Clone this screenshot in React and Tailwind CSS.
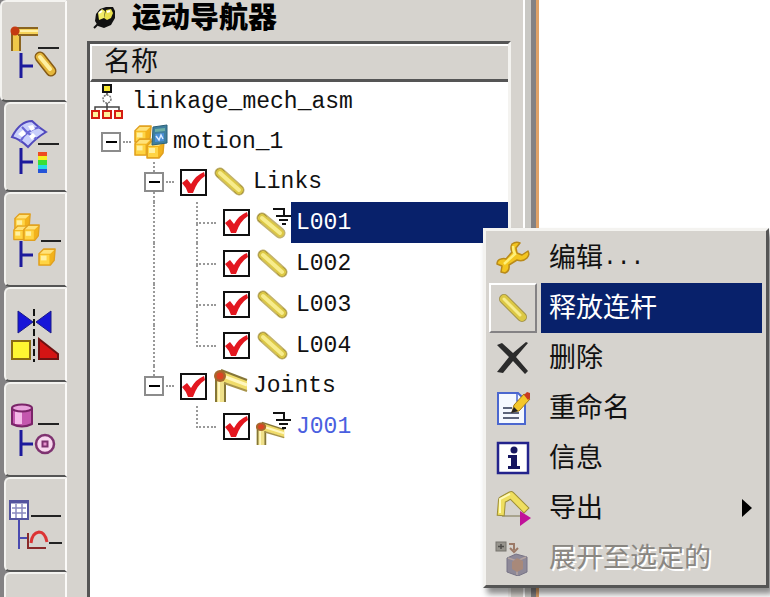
import { useState } from "react";

const treeFont = "font-['Liberation_Mono','Noto_Sans_CJK_SC',monospace]";
const cjkFont = "font-['Liberation_Sans','Noto_Sans_CJK_SC',sans-serif]";

/* ---------- tree icons ---------- */

function Ground() {
  return <path d="M17 4h11v7M20 11h15M23 15h9M26 19h4" fill="none" stroke="#111" strokeWidth="2" />;
}

function LinkIcon({ grounded }) {
  const d = grounded ? "M6 13 24 28" : "M7 9 26 26";
  return (
    <svg viewBox="0 0 35 36" className="w-[35px] h-9 shrink-0" aria-hidden="true">
      <path d={d} stroke="#c2b26e" strokeWidth="11" strokeLinecap="round" />
      <path d={d} stroke="#8d7a2c" strokeWidth="9" strokeLinecap="round" strokeDasharray="1 23 2" />
      <path d={d} stroke="#dcc845" strokeWidth="8" strokeLinecap="round" />
      <path d={d} stroke="#f7ec8c" strokeWidth="4" strokeLinecap="round" />
      {grounded && <Ground />}
    </svg>
  );
}

function JointIcon({ grounded }) {
  return (
    <svg viewBox="0 0 35 36" className="w-[35px] h-9 shrink-0" aria-hidden="true">
      <g transform={grounded ? "translate(-1 12) scale(.86 .72)" : undefined}>
        <path d="M2 8h11v26H2z" fill="#efe08a" />
        <path d="M3 8v26M12 12v22" stroke="#857638" strokeWidth="2" />
        <path d="M6 10v24" stroke="#fff7be" strokeWidth="2" />
        <path d="M8 2 34 12v11L8 13z" fill="#f0dc6a" />
        <path d="M8 2 34 12" stroke="#857638" strokeWidth="2" />
        <path d="M11 15 34 23" stroke="#a8944a" strokeWidth="2" />
        <path d="M10 8 34 17" stroke="#fff7be" strokeWidth="3" />
        <circle cx="7" cy="8" r="6" fill="#a5672d" />
        <circle cx="7" cy="8" r="3.5" fill="#dc4422" />
      </g>
      {grounded && <Ground />}
    </svg>
  );
}

function AssemblyIcon() {
  return (
    <svg viewBox="0 0 34 36" className="w-[34px] h-9 shrink-0" aria-hidden="true">
      <path d="M17 9v14M5 28v-5h24v5M17 23v5" fill="none" stroke="#444" strokeWidth="1.5" />
      <rect x="13" y="1" width="8" height="7" fill="#f5e52f" stroke="#111" strokeWidth="2" />
      <circle cx="17" cy="15" r="4" fill="#fff" stroke="#777" strokeWidth="1.5" strokeDasharray="2 1" />
      <g fill="#fff29a" stroke="#d41c12" strokeWidth="2">
        <rect x="2" y="27" width="7" height="7" />
        <rect x="13" y="27" width="8" height="7" />
        <rect x="25" y="27" width="7" height="7" />
      </g>
    </svg>
  );
}

function Cube({ x, y, s = 1 }) {
  return (
    <g transform={`translate(${x} ${y}) scale(${s})`}>
      <path d="M1 5 6 0h12l-1 12-4 5H1z" fill="#f2b21c" stroke="#e0a020" strokeWidth="1.5" strokeLinejoin="round" />
      <path d="M2 5 6 1h11l-4 4z" fill="#ffe27a" />
      <rect x="2" y="6" width="10" height="10" fill="#ffd444" />
      <rect x="3" y="7" width="6" height="5" fill="#fff0a0" />
    </g>
  );
}

function MotionIcon() {
  return (
    <svg viewBox="0 0 36 36" className="w-9 h-9 shrink-0" aria-hidden="true">
      <Cube x={1} y={2} s={0.95} />
      <Cube x={1} y={15} s={0.95} />
      <Cube x={13} y={17} s={1} />
      <path d="m20 3 14-2v18l-15 2z" fill="#3f7f9e" stroke="#2d6178" />
      <path d="m22 5 10-1v3l-10 1z" fill="#6fb0a4" />
      <path d="m22 10 9-1v8l-9 1z" fill="#4b8fd6" />
      <path d="m23 12 3 4 2-5 2 4" fill="none" stroke="#dcecff" strokeWidth="1.5" />
    </svg>
  );
}

/* ---------- tab icons ---------- */

function TabSvg({ children }) {
  return (
    <svg viewBox="0 0 56 56" className="w-14 h-14 shrink-0" fill="none" aria-hidden="true">
      {children}
    </svg>
  );
}

const tabs = [
  {
    label: "Motion Navigator",
    icon: (
      <TabSvg>
        <path d="M5 8h10v20H5z" fill="#f0c849" />
        <path d="M6 8v20M14 12v16" stroke="#8a6420" strokeWidth="2" />
        <path d="M8 4h24v8H8z" fill="#f5d25a" />
        <path d="M8 5h24M12 12h20" stroke="#8a6420" strokeWidth="2" />
        <path d="M14 8h18" stroke="#fff1a8" strokeWidth="2" />
        <circle cx="9" cy="8" r="4.5" fill="#c43b12" />
        <path d="M32 25h21" stroke="#222" strokeWidth="2" />
        <path d="M15 30v25M15 43h12" stroke="#1d1a9c" strokeWidth="3" />
        <path d="m34 34 11 14" stroke="#865b16" strokeWidth="11" strokeLinecap="round" />
        <path d="m34 34 11 14" stroke="#e5b73c" strokeWidth="8" strokeLinecap="round" />
        <path d="m34 34 10 12" stroke="#fff0a0" strokeWidth="4" strokeLinecap="round" />
      </TabSvg>
    ),
  },
  {
    label: "Post Processing",
    icon: (
      <TabSvg>
        <path d="M4 18Q12 2 24 2q7 7 14 11-10 6-18 15Q12 20 4 18z" fill="#c9cffb" stroke="#5149bd" strokeWidth="2" />
        <path d="M14 8q7 8 15 12M12 23q6-12 20-15" stroke="#6a67d6" strokeWidth="2" />
        <path d="m10 15 5-4 3 4-4 3zM20 7l5-1 2 4-4 2zM21 17l4-3 3 3-4 4z" fill="#fff" />
        <path d="M30 25h21" stroke="#222" strokeWidth="2" />
        <path d="M13 29v26M13 43h12" stroke="#1d1a9c" strokeWidth="3" />
        <path d="M30 33h9v4h-9z" fill="#ee4b22" />
        <path d="M30 37h9v4h-9z" fill="#f5ef24" />
        <path d="M30 41h9v5h-9z" fill="#38df35" />
        <path d="M30 46h9v4h-9z" fill="#25dbe3" />
        <path d="M30 50h9v4h-9z" fill="#2554d8" />
      </TabSvg>
    ),
  },
  {
    label: "Assembly Navigator",
    icon: (
      <TabSvg>
        <Cube x={6} y={2} s={0.9} />
        <Cube x={5} y={14} s={0.8} />
        <Cube x={15} y={13} s={0.9} />
        <path d="M33 29h20" stroke="#222" strokeWidth="2" />
        <path d="M13 29v26M13 43h12" stroke="#1d1a9c" strokeWidth="3" />
        <Cube x={30} y={37} s={0.95} />
      </TabSvg>
    ),
  },
  {
    label: "Constraint Navigator",
    icon: (
      <TabSvg>
        <path d="m10 4 15 11-15 11zM43 4 28 15l15 11z" fill="#1715d8" stroke="#1b1b87" />
        <path d="M26 2v53" stroke="#111" strokeWidth="2" strokeDasharray="7 3" />
        <rect x="4" y="34" width="18" height="18" fill="#fff632" stroke="#8a6a12" strokeWidth="2" />
        <path d="M31 32v20h19v-5z" fill="#d41414" stroke="#6d1212" strokeWidth="2" />
      </TabSvg>
    ),
  },
  {
    label: "Part Navigator",
    icon: (
      <TabSvg>
        <path d="M4 7v15q10 5 20 0V7z" fill="#c457ae" stroke="#7a2468" strokeWidth="2" />
        <path d="M7 9h7v13H7z" fill="#f4b9e8" />
        <ellipse cx="14" cy="6" rx="10" ry="3.5" fill="#e9a4dc" stroke="#7a2468" strokeWidth="2" />
        <path d="M30 22h21" stroke="#222" strokeWidth="2" />
        <path d="M13 28v26M13 42h12" stroke="#1d1a9c" strokeWidth="3" />
        <circle cx="37" cy="42" r="9" fill="#f7d7ee" stroke="#7e3270" strokeWidth="2.5" />
        <rect x="34.5" y="39.5" width="5" height="5" fill="#e58fcd" stroke="#7e3270" strokeWidth="2" />
      </TabSvg>
    ),
  },
  {
    label: "Results Navigator",
    icon: (
      <TabSvg>
        <rect x="2" y="4" width="18" height="18" fill="#fff" stroke="#54549f" strokeWidth="2" />
        <path d="M2 5h18" stroke="#54549f" strokeWidth="3" />
        <path d="M4 11h14M4 16h14M8 7v14M14 7v14" stroke="#8b8bc0" strokeWidth="1.5" />
        <path d="M23 19h30M41 46h13" stroke="#222" strokeWidth="2" />
        <path d="M11 23v29M11 41h8" stroke="#4a4ab0" strokeWidth="2" />
        <path d="M20 36v15h18" stroke="#8a2a2a" strokeWidth="2" />
        <path d="M23 46q1-10 8-11 6 0 8 10" stroke="#dc3434" strokeWidth="3" />
      </TabSvg>
    ),
  },
  { label: "More", icon: null },
];

/* ---------- menu icons ---------- */

function MenuSvg({ children }) {
  return (
    <svg viewBox="0 0 36 36" className="w-9 h-9" fill="none" aria-hidden="true">
      {children}
    </svg>
  );
}

const menuItems = [
  {
    label: "编辑",
    dots: true,
    icon: (
      <MenuSvg>
        <path d="M17 4q4-3 8-1l-4 5 1 5 5 2 6-4q2 4-1 7-4 4-10 2l-8 5q1 6-4 8l-4-1 1-6-5-2q0-4 4-5 3-1 5 0l6-7q-2-4 0-8z" fill="#f3c51f" stroke="#b98a1a" strokeWidth="1.5" strokeLinejoin="round" />
        <path d="M18 6q0 5 2 8L9 24" stroke="#fff07a" strokeWidth="2.5" />
      </MenuSvg>
    ),
  },
  {
    label: "释放连杆",
    icon: (
      <MenuSvg>
        <path d="m9 9 18 18" stroke="#a3934a" strokeWidth="10" strokeLinecap="round" />
        <path d="m9 9 18 18" stroke="#dcc845" strokeWidth="8" strokeLinecap="round" />
        <path d="m9 9 16 16" stroke="#f7ec8c" strokeWidth="3" strokeLinecap="round" />
      </MenuSvg>
    ),
  },
  {
    label: "删除",
    icon: (
      <MenuSvg>
        <path d="M2 5 7 3l11 10L31 2l2 1-12 14 12 14-3 3-12-13L8 33l-6-1 12-15z" fill="#2b2b2b" />
      </MenuSvg>
    ),
  },
  {
    label: "重命名",
    icon: (
      <MenuSvg>
        <path d="M3 3h20l7 7v24H3z" fill="#f5f9ff" stroke="#4b67cf" strokeWidth="2" />
        <path d="M22 3v8h8" stroke="#4b67cf" strokeWidth="1.5" />
        <path d="M8 18h9M8 23h16M8 28h16" stroke="#2b3450" strokeWidth="1.5" />
        <path d="m17 22 2-7L29 4l6 5-11 12z" fill="#f4c72a" stroke="#a37a14" />
        <path d="m29 5 3-3 3 1v5l-2 2z" fill="#c73a22" />
        <path d="m16 23 3-6 4 4z" fill="#222" />
      </MenuSvg>
    ),
  },
  {
    label: "信息",
    icon: (
      <MenuSvg>
        <rect x="3" y="3" width="30" height="30" fill="#fff" stroke="#23238c" strokeWidth="2.5" />
        <circle cx="19" cy="10" r="3.5" fill="#161660" />
        <path d="M13 15h9v11h3v3H13v-3h3v-8h-3z" fill="#161660" />
      </MenuSvg>
    ),
  },
  {
    label: "导出",
    submenu: true,
    icon: (
      <MenuSvg>
        <path d="M7 26h20" stroke="#a9a48e" strokeWidth="2" />
        <path d="M6 22 7 10l9-5 13 13" stroke="#9d8e38" strokeWidth="8" strokeLinecap="square" strokeLinejoin="round" />
        <path d="M6 22 7 10l9-5 13 13" stroke="#efdf60" strokeWidth="6" strokeLinecap="square" strokeLinejoin="round" />
        <path d="M5 23V9l10-5" stroke="#fffab8" strokeWidth="2" />
        <path d="m25 21 11 7-11 8z" fill="#c0119a" />
      </MenuSvg>
    ),
  },
  {
    label: "展开至选定的",
    disabled: true,
    icon: (
      <MenuSvg>
        <rect x="1" y="2" width="10" height="9" fill="#96938c" stroke="#77746e" />
        <path d="M3 6.5h6M6 4v5" stroke="#4e4c49" strokeWidth="1.5" />
        <path d="M14 4h5v6m-4-2 4 4 4-4" stroke="#9c7a68" strokeWidth="2" />
        <path d="m12 18 9-4 11 3v15l-9 4-11-4z" fill="#8e8998" stroke="#777386" />
        <path d="m13 18 9 3 9-4M22 21v14" stroke="#b4a3a0" strokeWidth="1.5" />
        <path d="m17 22 5-4 6 3v8l-6 3-5-3z" fill="#a8897a" />
      </MenuSvg>
    ),
  },
];

/* ---------- tree rows ---------- */

function Expander({ name }) {
  return (
    <button type="button" aria-label={`Collapse ${name}`} className="flex items-center justify-center w-5 h-5 shrink-0 border-2 border-[#8c8c8c] bg-white">
      <span className="w-[11px] h-[2px] bg-black" />
    </button>
  );
}

function Check({ id }) {
  return (
    <span className="grid w-[27px] h-[27px] shrink-0">
      <input id={id} type="checkbox" defaultChecked className="peer col-start-1 row-start-1 appearance-none w-[27px] h-[27px] border-2 border-[#111] bg-white" />
      <svg viewBox="0 0 27 27" className="col-start-1 row-start-1 w-[27px] h-[27px] pointer-events-none invisible peer-checked:visible" aria-hidden="true">
        <path d="M2 14 7 10l4 5Q16 6 24 3l1 4Q17 12 13 24H8Q6 18 2 14z" fill="#e3171f" />
      </svg>
    </span>
  );
}

function GroupRow({ id, label, icon, last }) {
  return (
    <li className="flex items-center h-10 pl-[54px]">
      <span className="flex flex-col items-center w-5 self-stretch">
        <span className="flex-1 border-l-2 border-dotted border-[#999]" />
        <Expander name={label} />
        <span className={last ? "flex-1" : "flex-1 border-l-2 border-dotted border-[#999]"} />
      </span>
      <span className="w-2 ml-[2px] mr-[6px] border-t-2 border-dotted border-[#999]" />
      <Check id={id} />
      <span className="ml-[6px]">{icon}</span>
      <label htmlFor={id} className="pl-[5px]">{label}</label>
    </li>
  );
}

function LeafRow({ id, icon, trunk, last, selected, blue }) {
  return (
    <li className="flex items-center h-[41px] pl-[63px]">
      <span className={trunk ? "w-[43px] self-stretch border-l-2 border-dotted border-[#999]" : "w-[43px]"} />
      <span className="flex flex-col w-5 mr-[7px] self-stretch">
        <span className="flex-1 border-l-2 border-b-2 border-dotted border-[#999]" />
        <span className={last ? "flex-1" : "flex-1 border-l-2 border-dotted border-[#999]"} />
      </span>
      <Check id={id} />
      <span className="ml-[6px]">{icon}</span>
      <label
        htmlFor={id}
        className={`flex flex-1 items-center self-stretch pl-[5px] ${selected ? "bg-[#08216b] text-white" : ""} ${blue ? "text-[#4a5fe0]" : ""}`}
      >
        {id}
      </label>
    </li>
  );
}

function Tree() {
  return (
    <ul className={`text-[23px] leading-7 text-[#111] ${treeFont}`}>
      <li className="flex items-center h-10">
        <AssemblyIcon />
        <span className="pl-2">linkage_mech_asm</span>
      </li>
      <li className="flex items-center h-10 pl-[11px]">
        <Expander name="motion_1" />
        <span className="w-2 mx-[2px] border-t-2 border-dotted border-[#999]" />
        <MotionIcon />
        <span className="pl-1">motion_1</span>
      </li>
      <GroupRow id="links" label="Links" icon={<LinkIcon />} />
      <LeafRow id="L001" icon={<LinkIcon grounded />} trunk selected />
      <LeafRow id="L002" icon={<LinkIcon />} trunk />
      <LeafRow id="L003" icon={<LinkIcon />} trunk />
      <LeafRow id="L004" icon={<LinkIcon />} trunk last />
      <GroupRow id="joints" label="Joints" icon={<JointIcon />} last />
      <LeafRow id="J001" icon={<JointIcon grounded />} last blue />
    </ul>
  );
}

function ContextMenu() {
  const [active, setActive] = useState(1);

  return (
    <div
      role="menu"
      className={`absolute left-[483px] top-[228px] w-[286px] py-[2px] pl-[3px] pr-1 bg-[#d6d3ce] border-[3px] border-t-[#f4f3f0] border-l-[#f4f3f0] border-r-[#555] border-b-[#555] shadow-[4px_6px_6px_rgba(0,0,0,0.45)] text-[27px] leading-8 ${cjkFont}`}
    >
      {menuItems.map((item, i) => (
        <button
          key={item.label}
          type="button"
          role="menuitem"
          disabled={item.disabled}
          onMouseEnter={() => setActive(i)}
          className="flex items-stretch w-full h-[50px] text-left"
        >
          <span className={`flex items-center justify-center w-12 mr-1 border-2 ${i === active ? "border-t-white border-l-white border-r-[#848284] border-b-[#848284]" : "border-transparent"}`}>
            {item.icon}
          </span>
          <span
            className={`flex flex-1 items-center pl-2 ${i === active ? "bg-[#08216b] text-white" : item.disabled ? "text-[#8a8782] [text-shadow:2px_2px_0_#fff]" : "text-[#111]"}`}
          >
            {item.label}
            {item.dots && <span className={`text-[23px] ${treeFont}`}>...</span>}
            {item.submenu && (
              <svg viewBox="0 0 10 18" className="w-[10px] h-[18px] ml-auto mr-[10px]" aria-hidden="true">
                <path d="M0 0 10 9 0 18z" fill="#000" />
              </svg>
            )}
          </span>
        </button>
      ))}
    </div>
  );
}

export default function App() {
  return (
    <div className="relative h-screen overflow-hidden bg-white">
      <div className="flex w-[70%] h-full bg-[#d6d3ce]">
        {/* Resource bar */}
        <nav className="flex flex-col w-[67px] shrink-0 bg-[#848284]">
          {tabs.map((tab, i) => (
            <button
              key={tab.label}
              type="button"
              aria-label={tab.label}
              className={`flex items-center justify-center shrink-0 border-2 border-t-[#f4f3f0] border-l-[#f4f3f0] border-r-[#fbfaf8] border-b-[#555] rounded-l-md bg-[#d6d3ce] ${i === 0 ? "h-[102px]" : i === 1 ? "h-[90px] ml-1" : "h-[95px] ml-1"}`}
            >
              {tab.icon}
            </button>
          ))}
        </nav>

        {/* Navigator panel */}
        <section className="flex flex-col flex-1 min-w-0 pl-5">
          <header className="flex items-center h-[41px] pb-[6px] pl-[5px]">
            <svg viewBox="0 0 24 24" className="w-6 h-6 mr-4 shrink-0" aria-hidden="true">
              <path d="M2 22 7 17" stroke="#111" strokeWidth="2" />
              <path d="M4 8 8 3l6-2h7l2 4v7l-4 7-7 3-6-2-3-5z" fill="#111" />
              <path d="m6 7 4-4 3 2-1 7-5 2z" fill="#f1ec6a" />
              <path d="m14 4 5-1 2 4-2 5-4 2-3-2z" fill="#e9e04c" />
              <path d="m7 7 3-2M15 6l3-1" stroke="#fff" strokeWidth="2" />
            </svg>
            <h1 className={`text-[29px] leading-8 font-black text-black whitespace-nowrap ${cjkFont}`}>运动导航器</h1>
          </header>
          <div className="flex-1 min-h-0 mr-3 border-t-[3px] border-l-[3px] border-[#555] border-r-[3px] border-r-[#f4f3f0] bg-white">
            <div className={`h-[38px] pl-3 border-t-2 border-l-2 border-t-white border-l-white border-b-[3px] border-b-[#555] bg-[#d6d3ce] text-[27px] leading-8 text-[#111] ${cjkFont}`}>
              名称
            </div>
            <Tree />
          </div>
        </section>

        {/* Window frame on the right */}
        <div className="flex shrink-0">
          <span className="w-[2px] bg-white" />
          <span className="w-[6px] bg-[#c9c8c4]" />
          <span className="w-[5px] bg-[#848284]" />
          <span className="w-[3px] bg-[#e0a268]" />
        </div>
      </div>

      <ContextMenu />
    </div>
  );
}
